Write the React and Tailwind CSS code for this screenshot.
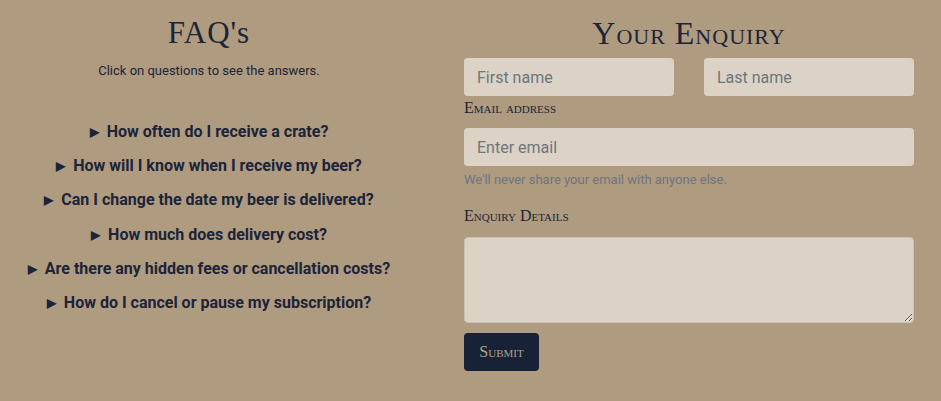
import React from "react";

const faqs = [
  "How often do I receive a crate?",
  "How will I know when I receive my beer?",
  "Can I change the date my beer is delivered?",
  "How much does delivery cost?",
  "Are there any hidden fees or cancellation costs?",
  "How do I cancel or pause my subscription?",
];

export default function App() {
  return (
    <div
      className="w-[941px] h-[401px] bg-[#af9b80] text-[#1b2438] flex"
      style={{ fontFamily: "Roboto, 'Liberation Sans', sans-serif" }}
    >
      <div className="w-[418px] flex flex-col items-center pt-[14px]">
        <h2
          className="text-[31px] leading-[38px] tracking-[1px]"
          style={{ fontFamily: "'Liberation Serif', serif" }}
        >
          FAQ's
        </h2>
        <p className="text-[13px] leading-[18px] mt-[10px]">Click on questions to see the answers.</p>
        <div className="mt-[42px] flex flex-col items-center gap-[14.2px]">
          {faqs.map((q) => (
            <div key={q} className="flex items-center text-[16px] leading-[20px] font-bold">
              <span className="text-[12px] mr-[8px]">▶</span>
              <span>{q}</span>
            </div>
          ))}
        </div>
      </div>
      <div className="ml-[46px] w-[450px] flex flex-col pt-[14px]">
        <h2
          className="text-[32px] leading-[38px] text-center tracking-[1px]"
          style={{ fontFamily: "'Liberation Serif', serif", fontVariant: "small-caps" }}
        >
          Your Enquiry
        </h2>
        <div className="flex gap-[30px] mt-[6px]">
          <input
            className="w-[210px] h-[38px] rounded-[4px] bg-[#dcd3c6] px-[13px] text-[16px] placeholder:text-[#6c757d] outline-none"
            placeholder="First name"
          />
          <input
            className="w-[210px] h-[38px] rounded-[4px] bg-[#dcd3c6] px-[13px] text-[16px] placeholder:text-[#6c757d] outline-none"
            placeholder="Last name"
          />
        </div>
        <label
          className="text-[16px] leading-[20px] mt-[2px]"
          style={{ fontFamily: "'Liberation Serif', serif", fontVariant: "small-caps" }}
        >
          Email address
        </label>
        <input
          className="w-[450px] h-[38px] mt-[10px] rounded-[4px] bg-[#dcd3c6] px-[13px] text-[16px] placeholder:text-[#6c757d] outline-none"
          placeholder="Enter email"
        />
        <p className="text-[13px] leading-[18px] mt-[5px] text-[#6c7580]">We'll never share your email with anyone else.</p>
        <label
          className="text-[16px] leading-[20px] mt-[17px]"
          style={{ fontFamily: "'Liberation Serif', serif", fontVariant: "small-caps" }}
        >
          Enquiry Details
        </label>
        <textarea className="w-[450px] h-[86px] mt-[11px] rounded-[4px] bg-[#dcd3c6] border border-[#c9c2b8] outline-none" />
        <button
          className="mt-[10px] w-[75px] h-[38px] rounded-[4px] bg-[#172236] text-[#b3a084] text-[16px]"
          style={{ fontFamily: "'Liberation Serif', serif", fontVariant: "small-caps" }}
        >
          Submit
        </button>
      </div>
    </div>
  );
}
